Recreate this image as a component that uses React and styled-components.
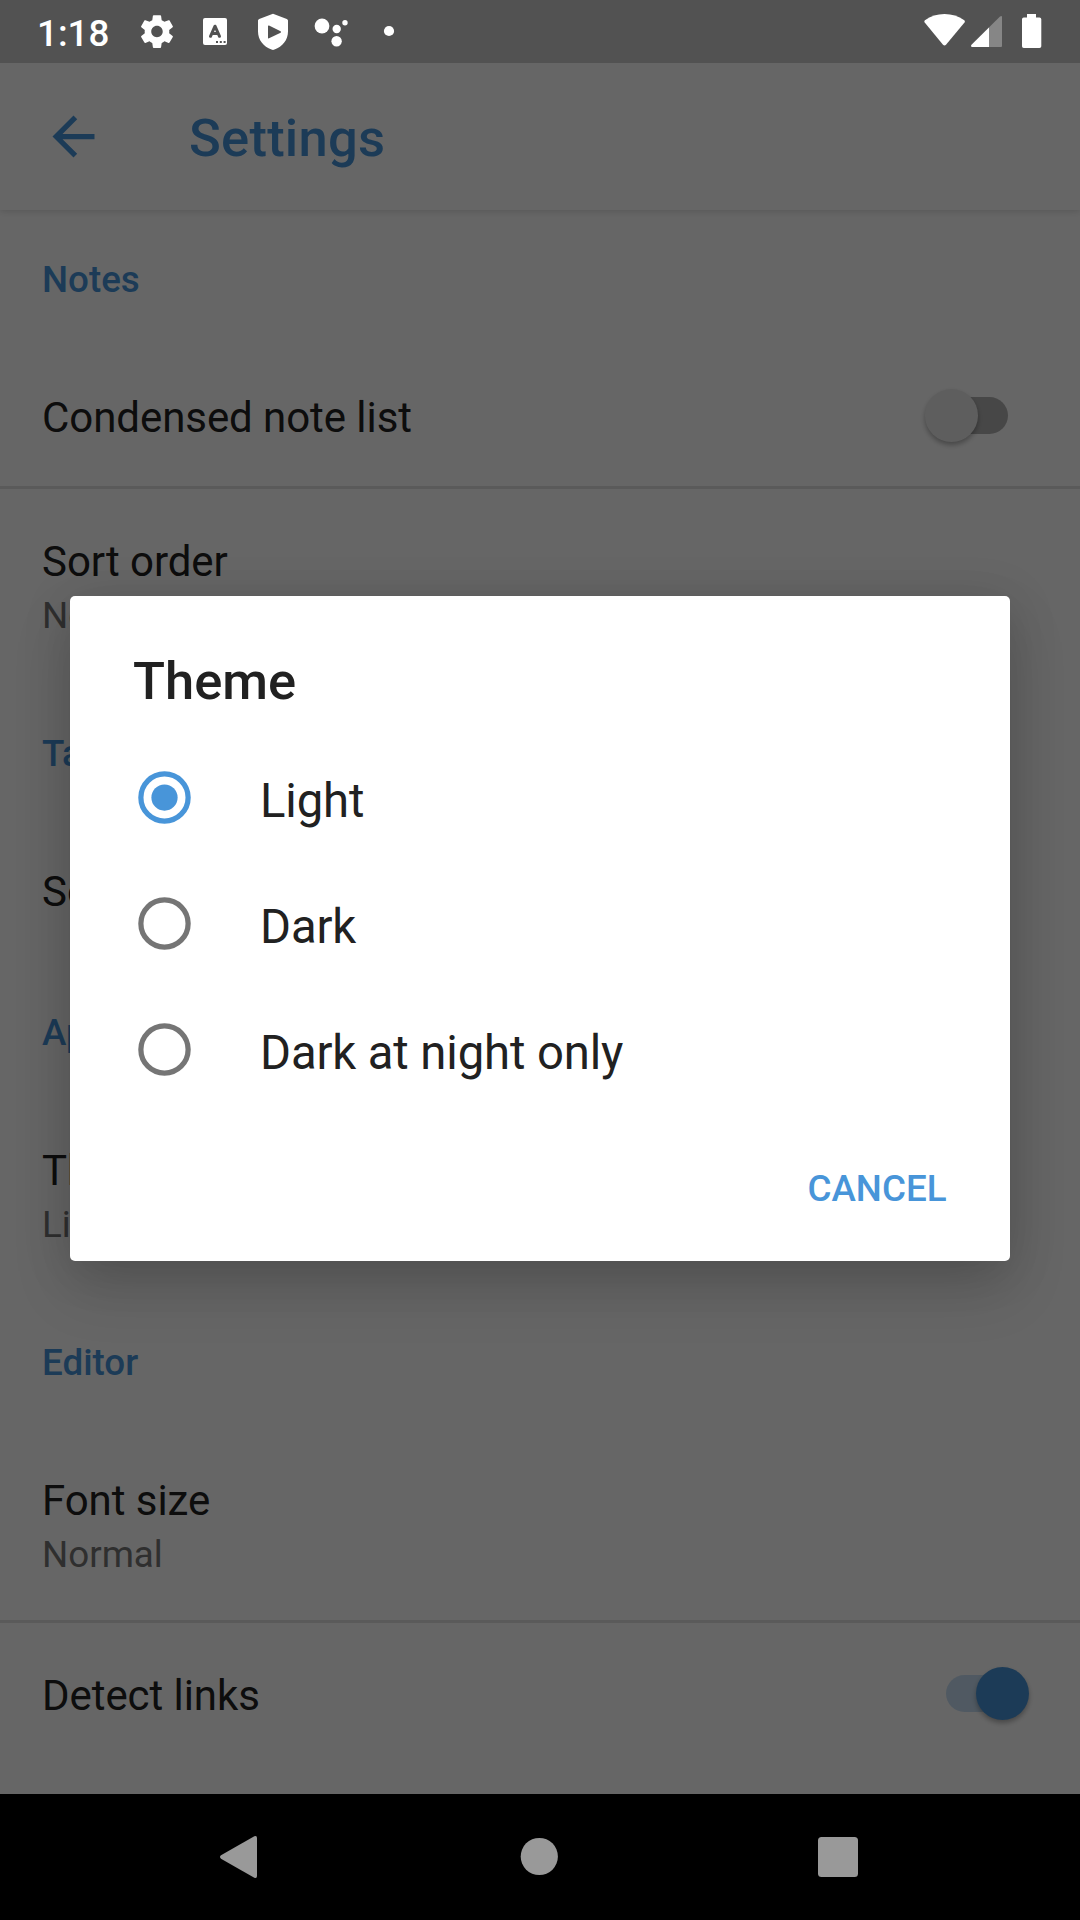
import React, { useState } from "react";
import styled, { createGlobalStyle } from "styled-components";

const GlobalStyle = createGlobalStyle`
  * { box-sizing: border-box; }
  body { margin: 0; background: #000; }
`;

const accent = "#4895d9";
const ink = "#212121";

const Screen = styled.div`
  display: flex;
  flex-direction: column;
  width: 1080px;
  height: 1920px;
  overflow: hidden;
  font-family: Roboto, "Noto Sans", sans-serif;
  color: ${ink};
`;

const StatusBar = styled.header`
  display: flex;
  flex: none;
  height: 63px;
  padding-right: 26px;
  background: #525252;
  color: #fff;
`;

const Clock = styled.time`
  width: 128px;
  padding: 12px 0 0 37px;
  font-size: 36.75px;
  font-weight: 500;
  line-height: 43px;
  white-space: nowrap;
`;

const Spacer = styled.div`
  flex: 1;
`;

const StatusIcon = styled.svg`
  display: block;
  flex: none;
  width: ${(p) => p.$width}px;
  height: 63px;
  fill: #fff;
`;

const Content = styled.div`
  position: relative;
  flex: 1;
  overflow: hidden;
  background: #fff;
`;

const AppBar = styled.div`
  position: relative;
  display: flex;
  align-items: center;
  gap: 84px;
  height: 147px;
  padding-left: 42px;
  background: #fff;
  color: ${accent};
  box-shadow: 0 1px 7px rgba(0, 0, 0, 0.16);
`;

const BackIcon = styled.svg`
  display: block;
  width: 63px;
  height: 63px;
  fill: currentColor;
`;

const ScreenTitle = styled.h1`
  margin: 0;
  padding-top: 3px;
  font-size: 52.5px;
  font-weight: 500;
  line-height: 62px;
  letter-spacing: 0.25px;
`;

const Section = styled.section`
  padding-bottom: 3px;
`;

const SectionTitle = styled.h2`
  height: 135px;
  margin: 0;
  padding: 48px 42px 0;
  color: ${accent};
  font-size: 36.75px;
  font-weight: 500;
  line-height: 43px;
`;

const Row = styled.div`
  display: flex;
  justify-content: space-between;
  height: ${(p) => (p.$tall ? 192 : 141)}px;
  padding: 0 ${(p) => (p.$on ? 51 : 72)}px 0 42px;
`;

const Divider = styled.hr`
  height: 3px;
  margin: 0;
  border: 0;
  background: #e2e2e2;
`;

const RowText = styled.div`
  padding-top: 48px;
`;

const RowTitle = styled.div`
  font-size: 42px;
  line-height: 50px;
  letter-spacing: -0.06px;
`;

const RowSummary = styled.div`
  margin-top: 7px;
  color: #757575;
  font-size: 36.75px;
  line-height: 43px;
`;

const SwitchBox = styled.span`
  display: grid;
  align-self: center;
  align-items: center;
  width: 83px;
  height: 53px;
`;

const SwitchTrack = styled.span`
  grid-area: 1 / 1;
  justify-self: ${(p) => (p.$on ? "start" : "end")};
  width: 68px;
  height: 37px;
  border-radius: 19px;
  background: ${(p) => (p.$on ? "rgba(72, 149, 217, 0.3)" : "#b2b2b2")};
`;

const SwitchThumb = styled.span`
  grid-area: 1 / 1;
  justify-self: ${(p) => (p.$on ? "end" : "start")};
  width: 53px;
  height: 53px;
  border-radius: 50%;
  background: ${(p) => (p.$on ? accent : "#ececec")};
  box-shadow: 0 3px 5px rgba(0, 0, 0, 0.3);
`;

const Scrim = styled.div`
  position: absolute;
  inset: 0;
  display: flex;
  align-items: center;
  justify-content: center;
  background: rgba(0, 0, 0, 0.6);
`;

const Dialog = styled.div`
  width: 940px;
  height: 665px;
  border-radius: 5px;
  background: #fff;
  box-shadow: 0 28px 60px rgba(0, 0, 0, 0.14), 0 6px 50px rgba(0, 0, 0, 0.13);
`;

const DialogTitle = styled.h2`
  height: 139px;
  margin: 0;
  padding: 54px 63px 0;
  font-size: 52.5px;
  font-weight: 500;
  line-height: 62px;
`;

const Option = styled.div`
  display: flex;
  align-items: center;
  gap: 64px;
  height: 126px;
  padding: 0 0 1px 63px;
  cursor: pointer;
`;

const RadioIcon = styled.svg`
  display: block;
  width: 63px;
  height: 63px;
  color: ${(p) => (p.$checked ? accent : "#757575")};
`;

const OptionLabel = styled.span`
  padding-top: 6px;
  font-size: 47.25px;
  line-height: 56px;
  letter-spacing: -0.12px;
`;

const DialogActions = styled.div`
  display: flex;
  justify-content: flex-end;
  padding: 54px 63.5px 0;
`;

const TextButton = styled.button`
  padding: 0;
  border: 0;
  background: none;
  color: ${accent};
  font: 500 36.75px / 43px Roboto, "Noto Sans", sans-serif;
  text-transform: uppercase;
`;

const NavBar = styled.nav`
  display: flex;
  flex: none;
  justify-content: center;
  gap: 172px;
  height: 126px;
  background: #000;
`;

const NavIcon = styled.svg`
  display: block;
  width: 126px;
  height: 126px;
  fill: #999;
`;

function Switch({ on }) {
  return (
    <SwitchBox>
      <SwitchTrack $on={on} />
      <SwitchThumb $on={on} />
    </SwitchBox>
  );
}

function Setting({ title, summary, toggle }) {
  return (
    <Row $tall={Boolean(summary)} $on={toggle === "on"}>
      <RowText>
        <RowTitle>{title}</RowTitle>
        {summary && <RowSummary>{summary}</RowSummary>}
      </RowText>
      {toggle && <Switch on={toggle === "on"} />}
    </Row>
  );
}

function Radio({ checked }) {
  return (
    <RadioIcon $checked={checked} viewBox="0 0 24 24">
      <circle cx="12" cy="12" r="9" fill="none" stroke="currentColor" strokeWidth="2" />
      {checked && <circle cx="12" cy="12" r="5" fill="currentColor" />}
    </RadioIcon>
  );
}

function SystemStatus() {
  return (
    <StatusBar>
      <Clock>1:18</Clock>
      <StatusIcon $width={58} viewBox="0 0 58 63">
        <path
          transform="translate(9.3 11.9) scale(1.64)"
          d="M19.43 12.98c.04-.32.07-.64.07-.98s-.03-.66-.07-.98l2.11-1.65c.19-.15.24-.42.12-.64l-2-3.46c-.12-.22-.39-.3-.61-.22l-2.49 1c-.52-.4-1.08-.73-1.69-.98l-.38-2.65C14.46 2.18 14.25 2 14 2h-4c-.25 0-.46.18-.49.42l-.38 2.65c-.61.25-1.17.59-1.69.98l-2.49-1c-.23-.09-.49 0-.61.22l-2 3.46c-.13.22-.07.49.12.64l2.11 1.65c-.04.32-.07.65-.07.98s.03.66.07.98l-2.11 1.65c-.19.15-.24.42-.12.64l2 3.46c.12.22.39.3.61.22l2.49-1c.52.4 1.08.73 1.69.98l.38 2.65c.03.24.24.42.49.42h4c.25 0 .46-.18.49-.42l.38-2.65c.61-.25 1.17-.59 1.69-.98l2.49 1c.23.09.49 0 .61-.22l2-3.46c.12-.22.07-.49-.12-.64l-2.11-1.65zM12 15.5c-1.93 0-3.5-1.57-3.5-3.5s1.57-3.5 3.5-3.5 3.5 1.57 3.5 3.5-1.57 3.5-3.5 3.5z"
        />
      </StatusIcon>
      <StatusIcon $width={58} viewBox="0 0 58 63">
        <rect x="17" y="18" width="24" height="27" rx="2" />
        <path
          d="M24.5 36.3L29 26.2L33.5 36.3M26 33.4H32"
          fill="none"
          stroke="#525252"
          strokeWidth="3"
          strokeLinecap="round"
          strokeLinejoin="round"
        />
        <path d="M30 41h2v2h-2zM33.8 41h2v2h-2zM37.6 41h2v2h-2z" fill="#525252" />
      </StatusIcon>
      <StatusIcon $width={58} viewBox="0 0 58 63">
        <path
          fillRule="evenodd"
          d="M29 13.8L42.8 19Q44 19.5 44 20.5V31.5C44 40 38.5 46.5 30.5 49.6Q29 50.2 27.5 49.6C19.5 46.5 14 40 14 31.5V20.5Q14 19.5 15.2 19ZM24 26.2V37.8Q24 38.8 25 38.3L36.6 32.7Q37.5 32 36.6 31.3L25 25.5Q24 25.2 24 26.2Z"
        />
      </StatusIcon>
      <StatusIcon $width={58} viewBox="0 0 58 63">
        <circle cx="20" cy="26" r="7.4" />
        <circle cx="34.7" cy="29" r="4.2" />
        <circle cx="43" cy="22.7" r="2.7" />
        <circle cx="34.6" cy="41.3" r="5.2" />
      </StatusIcon>
      <StatusIcon $width={58} viewBox="0 0 58 63">
        <circle cx="29" cy="31" r="5.1" />
      </StatusIcon>
      <Spacer />
      <StatusIcon $width={48} viewBox="920 0 48 63">
        <path d="M944.5 14Q955.5 14 964.3 20.3Q965.5 21.3 964.5 22.6L946 44.8Q944.5 46.3 943 44.8L924.7 22.6Q923.7 21.3 924.9 20.3Q933.5 14 944.5 14Z" />
      </StatusIcon>
      <StatusIcon $width={42} viewBox="968 0 42 63">
        <path d="M971.3 45L1000 16.5Q1002 15.3 1002 17V46Q1002 47 1001 47H972Q970.3 46.5 971.3 45Z" opacity="0.3" />
        <path d="M971.3 45L989 27.4V47H972Q970.3 46.5 971.3 45Z" />
      </StatusIcon>
      <StatusIcon $width={44} viewBox="1010 0 44 63">
        <path d="M1027 14H1036V17.5H1039.5Q1041.3 17.5 1041.3 19.3V46.2Q1041.3 48 1039.5 48H1023.8Q1022 48 1022 46.2V19.3Q1022 17.5 1023.8 17.5H1027Z" />
      </StatusIcon>
    </StatusBar>
  );
}

export default function App() {
  const [theme, setTheme] = useState("Light");

  return (
    <Screen>
      <GlobalStyle />
      <SystemStatus />
      <Content>
        <AppBar>
          <BackIcon viewBox="0 0 24 24">
            <path d="M20 11H7.83l5.59-5.59L12 4l-8 8 8 8 1.41-1.41L7.83 13H20v-2z" />
          </BackIcon>
          <ScreenTitle>Settings</ScreenTitle>
        </AppBar>

        <Section>
          <SectionTitle>Notes</SectionTitle>
          <Setting title="Condensed note list" toggle="off" />
          <Divider />
          <Setting title="Sort order" summary="Newest modified first" />
        </Section>
        <Section>
          <SectionTitle>Tags</SectionTitle>
          <Setting title="Sort alphabetically" toggle="off" />
        </Section>
        <Section>
          <SectionTitle>Appearance</SectionTitle>
          <Setting title="Theme" summary={theme} />
        </Section>
        <Section>
          <SectionTitle>Editor</SectionTitle>
          <Setting title="Font size" summary="Normal" />
          <Divider />
          <Setting title="Detect links" toggle="on" />
        </Section>

        <Scrim>
          <Dialog role="dialog">
            <DialogTitle>Theme</DialogTitle>
            {["Light", "Dark", "Dark at night only"].map((name) => (
              <Option key={name} onClick={() => setTheme(name)}>
                <Radio checked={name === theme} />
                <OptionLabel>{name}</OptionLabel>
              </Option>
            ))}
            <DialogActions>
              <TextButton>Cancel</TextButton>
            </DialogActions>
          </Dialog>
        </Scrim>
      </Content>
      <NavBar>
        <NavIcon viewBox="179 1794 126 126">
          <path d="M221 1855.3L254.3 1836.3Q257 1835.3 257 1838V1876Q257 1878.7 254.3 1877.7L221 1858.7Q219 1857 221 1855.3Z" />
        </NavIcon>
        <NavIcon viewBox="477 1794 126 126">
          <circle cx="539.3" cy="1856.5" r="18.6" />
        </NavIcon>
        <NavIcon viewBox="775 1794 126 126">
          <rect x="818" y="1837" width="40" height="40" rx="3.5" />
        </NavIcon>
      </NavBar>
    </Screen>
  );
}
